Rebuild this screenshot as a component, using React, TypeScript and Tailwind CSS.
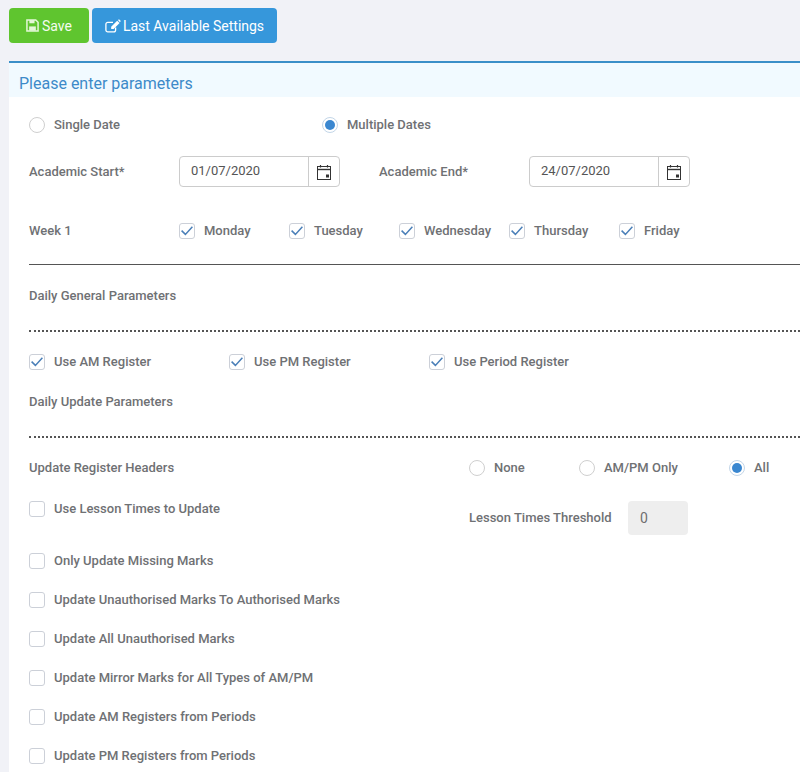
import React from "react";

const SaveIcon = () => (
  <svg viewBox="0 0 14 14" className="h-[13px] w-[13px]" fill="none">
    <path d="M1 1h9.5L13 3.5V13H1z" stroke="#e4f7d8" strokeWidth="1.6" />
    <rect x="3.6" y="1" width="5.6" height="3.6" fill="#e4f7d8" />
    <rect x="3.4" y="8" width="7.2" height="4.6" fill="#e4f7d8" />
  </svg>
);

const EditIcon = () => (
  <svg viewBox="0 0 16 14" className="h-[14px] w-4" fill="none">
    <path
      d="M10.6 8.4V11a1.9 1.9 0 0 1-1.9 1.9H2.8A1.9 1.9 0 0 1 .9 11V5.2a1.9 1.9 0 0 1 1.9-1.9H8"
      stroke="#ffffff"
      strokeWidth="1.3"
    />
    <path d="M12.2 1.7 14.6 4 8.6 10H6.2V7.7z" fill="#ffffff" />
    <path d="M13 1 14 .2l1.8 1.8-.9 1.2z" fill="#ffffff" />
  </svg>
);

const Radio = ({ checked = false }: { checked?: boolean }) => (
  <span
    className={`flex h-4 w-4 shrink-0 items-center justify-center rounded-full border bg-white ${
      checked ? "border-[#c3d6e8]" : "border-[#cfcfcf]"
    }`}
  >
    {checked && <span className="h-[10px] w-[10px] rounded-full bg-[#3a87d0]" />}
  </span>
);

const Check = ({ checked = false }: { checked?: boolean }) => (
  <span className="flex h-4 w-4 shrink-0 items-center justify-center rounded-[3px] border border-[#ccd0d8] bg-white">
    {checked && (
      <svg viewBox="0 0 16 16" className="h-4 w-4 shrink-0" fill="none">
        <path d="M2.6 7.6 6.4 11.4 13.4 3.8" stroke="#4a7fb8" strokeWidth="1.5" />
      </svg>
    )}
  </span>
);

const Option = ({
  label,
  className = "",
  children,
}: {
  label: string;
  className?: string;
  children: React.ReactNode;
}) => (
  <label className={`flex items-center ${className}`}>
    {children}
    <span className="ml-[9px]">{label}</span>
  </label>
);

const DateInput = ({ value }: { value: string }) => (
  <div className="flex h-[31px] w-[161px] rounded-[4px] border border-[#cccccc] bg-white">
    <div className="flex-1 pl-[11px] text-[13px] leading-[28px] font-normal text-[#555555]">
      {value}
    </div>
    <div className="flex w-[31px] items-center justify-center border-l border-[#cccccc]">
      <svg viewBox="0 0 16 16" className="h-4 w-4" fill="none">
        <rect x="1.5" y="2.5" width="13" height="13" stroke="#333" strokeWidth="1" />
        <path d="M1.5 5.5h13" stroke="#333" strokeWidth="1.4" />
        <path d="M4.5 1v2.5M11.5 1v2.5" stroke="#333" strokeWidth="1.2" />
        <rect x="10" y="10.5" width="3" height="3" fill="#333" />
      </svg>
    </div>
  </div>
);

const weekDays = ["Monday", "Tuesday", "Wednesday", "Thursday", "Friday"];

const updateRows = [
  "Only Update Missing Marks",
  "Update Unauthorised Marks To Authorised Marks",
  "Update All Unauthorised Marks",
  "Update Mirror Marks for All Types of AM/PM",
  "Update AM Registers from Periods",
  "Update PM Registers from Periods",
];

export default function App() {
  return (
    <div className="h-[772px] overflow-hidden bg-[#f1f2f7] pt-2 pl-[9px] font-['Roboto',sans-serif] text-[13px] font-medium text-[#6f7174]">
      <div className="flex gap-[3px]">
        <button className="flex h-[35px] w-[80px] items-center justify-center gap-[3px] rounded-[4px] bg-[#5fc52f] text-sm font-normal text-[#f4fcef]">
          <SaveIcon />
          Save
        </button>
        <button className="flex h-[35px] w-[185px] items-center justify-center gap-[2px] rounded-[4px] bg-[#3697db] text-sm font-normal text-white">
          <EditIcon />
          Last Available Settings
        </button>
      </div>

      <div className="mt-[18px] h-[720px] border-t-2 border-[#3a8fc8] bg-white">
        <div className="h-[34px] bg-[#f1faff] pl-[10px] text-base leading-[41px] font-normal text-[#3d8ac9]">
          Please enter parameters
        </div>

        <div className="pl-5">
          <div className="mt-[18px] flex h-[19px] items-center">
            <Option label="Single Date" className="w-[293px]">
              <Radio />
            </Option>
            <Option label="Multiple Dates">
              <Radio checked />
            </Option>
          </div>

          <div className="mt-[22px] flex items-center">
            <span className="w-[150px]">Academic Start*</span>
            <DateInput value="01/07/2020" />
            <span className="ml-[39px] w-[150px]">Academic End*</span>
            <DateInput value="24/07/2020" />
          </div>

          <div className="mt-[34px] flex h-[19px] items-center">
            <span className="w-[150px]">Week 1</span>
            {weekDays.map((d) => (
              <Option key={d} label={d} className="w-[110px]">
                <Check checked />
              </Option>
            ))}
          </div>

          <div className="mt-[24px] border-t border-[#555555]" />
          <div className="mt-[23px] leading-[15px]">Daily General Parameters</div>
          <div className="mt-[27px] border-t-2 border-dotted border-[#555555]" />

          <div className="mt-[20px] flex h-[19px] items-center">
            <Option label="Use AM Register" className="w-[200px]">
              <Check checked />
            </Option>
            <Option label="Use PM Register" className="w-[200px]">
              <Check checked />
            </Option>
            <Option label="Use Period Register">
              <Check checked />
            </Option>
          </div>

          <div className="mt-[23px] leading-[15px]">Daily Update Parameters</div>
          <div className="mt-[27px] border-t-2 border-dotted border-[#555555]" />

          <div className="mt-[20px] flex h-[19px] items-center">
            <span className="w-[440px]">Update Register Headers</span>
            <Option label="None" className="w-[110px]">
              <Radio />
            </Option>
            <Option label="AM/PM Only" className="w-[150px]">
              <Radio />
            </Option>
            <Option label="All">
              <Radio checked />
            </Option>
          </div>

          <div className="mt-[24px] flex h-[34px] items-start">
            <Option label="Use Lesson Times to Update" className="-mt-[2px] h-[19px] w-[440px]">
              <Check />
            </Option>
            <div className="flex items-center">
              <span className="w-[159px]">Lesson Times Threshold</span>
              <div className="h-[34px] w-[60px] rounded-[4px] bg-[#eeeeee] pl-[12px] text-sm leading-[34px] font-normal text-[#6f6f6f]">
                0
              </div>
            </div>
          </div>

          <div className="mt-[16px] flex flex-col gap-[20px]">
            {updateRows.map((r) => (
              <Option key={r} label={r} className="h-[19px]">
                <Check />
              </Option>
            ))}
          </div>
        </div>
      </div>
    </div>
  );
}
